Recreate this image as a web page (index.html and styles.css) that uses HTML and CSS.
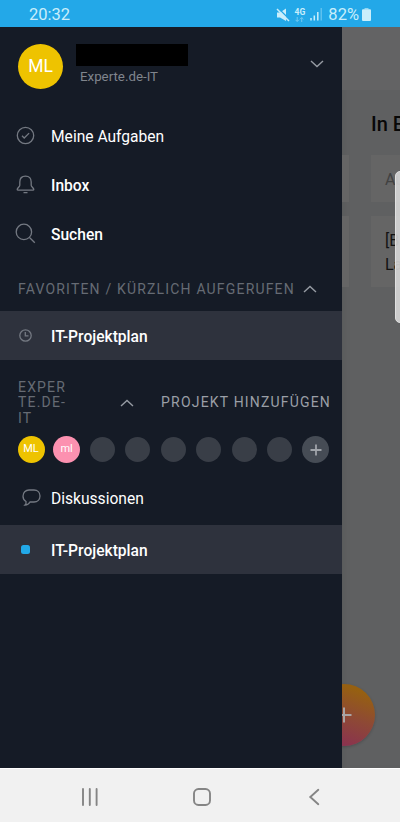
FILE: index.html
```html
<!DOCTYPE html>
<html lang="de">
<head>
<meta charset="utf-8">
<title>IT-Projektplan</title>
<link rel="stylesheet" href="styles.css">
</head>
<body>
<div class="phone">
  <header class="status">
    <span class="clock">20:32</span>
    <span class="indicators">
      <svg class="mute" width="14" height="14" viewBox="0 0 14 14"><path d="M1 4.500h3L10 .500v12.500L4 9.500H1z" fill="#c9eefb"/><path d="M2 0l12 12" stroke="#23a8e8" stroke-width="1.400"/><path d="M1 1l12 12" stroke="#c9eefb" stroke-width="1.500"/></svg>
      <span class="network"><b>4G</b><svg width="9" height="5" viewBox="0 0 9 5"><path d="M2.200 0v4.300M.500 2.800l1.700 1.700 1.700-1.700M6.700 5V.600M5 2.200L6.700.500l1.700 1.700" fill="none" stroke="#7accf1" stroke-width=".9"/></svg></span>
      <svg class="signal" width="12" height="13" viewBox="0 0 12 13"><path d="M1 10v2.500M4.300 7.500v5M7.800 4v8.500" stroke="#c9eefb" stroke-width="1.500"/><path d="M11.200 0v12.500" stroke="#6ec8f0" stroke-width="1.200"/></svg>
      <span class="percent">82%</span>
      <svg class="battery" width="9" height="13" viewBox="0 0 9 13"><path d="M2.500 0h4v1.500h-4z" fill="#8fd5f3"/><rect y="1.200" width="9" height="11.800" rx="1" fill="#c9eefb"/></svg>
    </span>
  </header>

  <main class="screen">
    <aside class="drawer">
      <section class="profile">
        <span class="avatar avatar-large">ML</span>
        <div class="identity"><span class="redacted"></span><span class="org">Experte.de-IT</span></div>
        <svg class="chevron" width="14" height="8" viewBox="0 0 14 8"><path d="M1 1l6 5.600L13 1"/></svg>
      </section>

      <nav class="menu">
        <a class="item"><span class="icon"><svg width="19" height="19" viewBox="0 0 19 19"><circle cx="9.500" cy="9.500" r="8.200"/><path d="M6 9.800l2.200 2.200 4.900-4.900"/></svg></span>Meine Aufgaben</a>
        <a class="item strong"><span class="icon"><svg width="19" height="19" viewBox="0 0 19 19"><path d="M9.500 1.100c-3.700 0-5.700 2.500-5.700 5.800v3.300c0 1.400-2.600 3.100-2.600 4.200 0 .500.500.700 1 .700h14.600c.500 0 1-.200 1-.700 0-1.100-2.600-2.800-2.600-4.200V6.900c0-3.300-2-5.800-5.700-5.800zM7.500 17.600h4"/></svg></span>Inbox</a>
        <a class="item strong"><span class="icon"><svg width="21" height="21" viewBox="0 0 21 21"><circle cx="8.900" cy="8.900" r="7.700"/><path d="M14.500 14.500l5.300 5.300"/></svg></span>Suchen</a>
      </nav>

      <div class="section-title">
        <span>FAVORITEN / KÜRZLICH AUFGERUFEN</span>
        <svg class="chevron" width="14" height="8" viewBox="0 0 14 8"><path d="M1 7l6-5.600L13 7"/></svg>
      </div>
      <a class="item strong selected"><span class="icon"><svg width="13" height="13" viewBox="0 0 13 13"><circle cx="6.500" cy="6.500" r="5.700"/><path d="M6.300 3v3.800h3.200"/></svg></span>IT-Projektplan</a>

      <div class="team-title">
        <span class="team-name">EXPER<br>TE.DE-<br>IT</span>
        <svg class="chevron" width="14" height="8" viewBox="0 0 14 8"><path d="M1 7l6-5.600L13 7"/></svg>
        <span class="add-project">PROJEKT HINZUFÜGEN</span>
      </div>
      <div class="members">
        <span class="avatar">ML</span>
        <span class="avatar pink">ml</span>
        <span class="avatar empty"></span>
        <span class="avatar empty"></span>
        <span class="avatar empty"></span>
        <span class="avatar empty"></span>
        <span class="avatar empty"></span>
        <span class="avatar empty"></span>
        <span class="avatar add"><svg width="12" height="12" viewBox="0 0 12 12"><path d="M6 .500v11M.500 6h11" stroke="#a0a4aa" stroke-width="1.800"/></svg></span>
      </div>
      <a class="item talk"><span class="icon"><svg width="19" height="18" viewBox="0 0 19 18"><path d="M4 12.500C2.200 11.500 1 9.500 1 7.200 1 3.700 3.500 1 7 1h5c3.500 0 6 2.500 6 6s-2.500 6-6 6H8c-1 1.800-2.800 3-5 3 1-.900 1.300-2 1-3.500z"/></svg></span>Diskussionen</a>
      <a class="item strong selected"><span class="icon"><i class="project-color"></i></span>IT-Projektplan</a>
    </aside>

    <section class="board">
      <div class="toolbar"></div>
      <div class="columns">
        <div class="column previous">
          <div class="card new"></div>
          <div class="card task"></div>
        </div>
        <div class="column">
          <h2>In B</h2>
          <div class="card new">Au</div>
          <div class="card task">[B<br>La</div>
        </div>
      </div>
    </section>
    <span class="fab"><svg width="16" height="16" viewBox="0 0 16 16"><path d="M8 .500v15M.500 8h15" stroke="#a9a4a4" stroke-width="2"/></svg></span>
    <span class="edge-panel"></span>
  </main>

  <footer class="softkeys">
    <svg width="18" height="18" viewBox="0 0 18 18"><path d="M2 1v16M8.800 1v16M15.600 1v16"/></svg>
    <svg width="18" height="18" viewBox="0 0 18 18"><rect x="1" y="1" width="16" height="16" rx="4.500"/></svg>
    <svg width="18" height="18" viewBox="0 0 18 18"><path d="M13.300 1.800L5.300 9l8 7.200"/></svg>
  </footer>
</div>
</body>
</html>
```
FILE: styles.css
```css
* { box-sizing: border-box; }
body { margin: 0; font-family: Roboto, "Liberation Sans", sans-serif; }
svg { display: block; flex: none; }
.phone { width: 400px; height: 822px; display: flex; flex-direction: column; overflow: hidden; }

.status { height: 27px; flex: none; display: flex; justify-content: space-between; align-items: center; padding: 2px 29px 0; background: #23a8e8; color: #c9eefb; font-size: 16.500px; }
.indicators { display: flex; align-items: center; }
.network { display: flex; flex-direction: column; align-items: center; gap: 1px; width: 11px; margin: 0 5px 0 4px; }
.network b { font-size: 8.500px; line-height: 8px; }
.percent { margin: 0 3px 0 6px; }

.screen { position: relative; flex: 1; display: flex; min-height: 0; overflow: hidden; }
.drawer { position: relative; z-index: 2; width: 342px; flex: none; background: #151b26; color: #fff; }
.profile { height: 84px; display: flex; align-items: center; padding: 0 18px; }
.avatar { width: 27px; height: 27px; border-radius: 50%; background: #eec300; display: flex; align-items: center; justify-content: center; color: #fff; font-size: 11px; padding-bottom: 2px; flex: none; }
.avatar-large { width: 45px; height: 45px; font-size: 17.500px; margin-top: -5px; padding-bottom: 1px; }
.identity { display: flex; flex-direction: column; margin: -9px auto 0 13px; }
.redacted { width: 112px; height: 22px; background: #000; }
.org { margin: 3px 0 0 4px; font-size: 13.300px; line-height: 16px; color: #80858d; }
.chevron { fill: none; stroke: #969ba3; stroke-width: 1.400; }
.profile .chevron { margin-top: -10px; }

.item { height: 49px; display: flex; align-items: center; padding-top: 2px; font-size: 15.600px; }
.icon { width: 51px; padding-left: 16px; flex: none; margin-top: -2px; }
.icon svg { fill: none; stroke: #747982; stroke-width: 1.300; }
.item:nth-child(3) .icon { padding-left: 15px; }
.strong { font-weight: 500; }
.selected { background: #2e323d; }
.selected .icon { padding-left: 18.500px; }
.section-title { height: 53px; display: flex; align-items: center; justify-content: space-between; padding: 9px 25px 0 18px; font-size: 14px; letter-spacing: 1.180px; color: #666b74; white-space: nowrap; }
.team-title { height: 76px; display: flex; align-items: center; padding: 10px 11px 0 18px; font-size: 14px; line-height: 15.500px; letter-spacing: 1.180px; color: #666b74; }
.team-name { width: 102px; }
.add-project { margin-left: auto; color: #9a9fa7; white-space: nowrap; }
.members { display: flex; justify-content: space-between; padding: 0 13px 0 17.500px; }
.pink { background: #fc91b0; }
.empty { width: 25px; height: 25px; margin: 1px; background: #393e47; }
.add { background: #464c55; padding: 0; }
.talk { height: 62px; padding-top: 9px; }
.talk .icon { padding-left: 21.500px; }
.project-color { display: block; width: 9px; height: 9px; border-radius: 2.500px; background: #22a9e8; margin-left: 2.500px; }

.board { flex: 1; min-width: 0; background: #5f6061; overflow: hidden; box-shadow: inset 5px 0 5px -3px #55565799; }
.toolbar { height: 63px; background: #636364; }
.columns { display: flex; gap: 22px; }
.column { flex: none; width: 240px; }
.column.previous { width: 7px; padding-top: 65px; }
.previous .card { padding-left: 0; }
h2 { height: 65px; margin: 0; padding-top: 22px; font-size: 20px; line-height: 24px; font-weight: 500; color: #080808; }
.card { background: #656565; padding-left: 14px; font-size: 16px; color: #121212; }
.card.new { height: 47px; line-height: 49px; color: #414141; margin-bottom: 14px; }
.card.task { height: 71px; padding-top: 13px; line-height: 24px; }
.fab { position: absolute; z-index: 1; left: 313px; top: 657px; width: 62px; height: 62px; border-radius: 50%; background: linear-gradient(200deg, #966011 15%, #8e4935 50%, #893052 90%); display: flex; align-items: center; justify-content: center; box-shadow: 0 1px 3px #0003; }
.edge-panel { position: absolute; right: -8px; top: 144px; width: 13px; height: 152px; border-radius: 5px; background: #d8d8d8e6; border: 1px solid #e0e0e0; }

.softkeys { height: 54px; flex: none; display: flex; justify-content: space-between; align-items: center; padding: 2px 77px 0 81px; background: #f1f1f1; border-top: 1px solid #fff; }
.softkeys svg { fill: none; stroke: #858585; stroke-width: 1.900; stroke-linecap: round; }
```
